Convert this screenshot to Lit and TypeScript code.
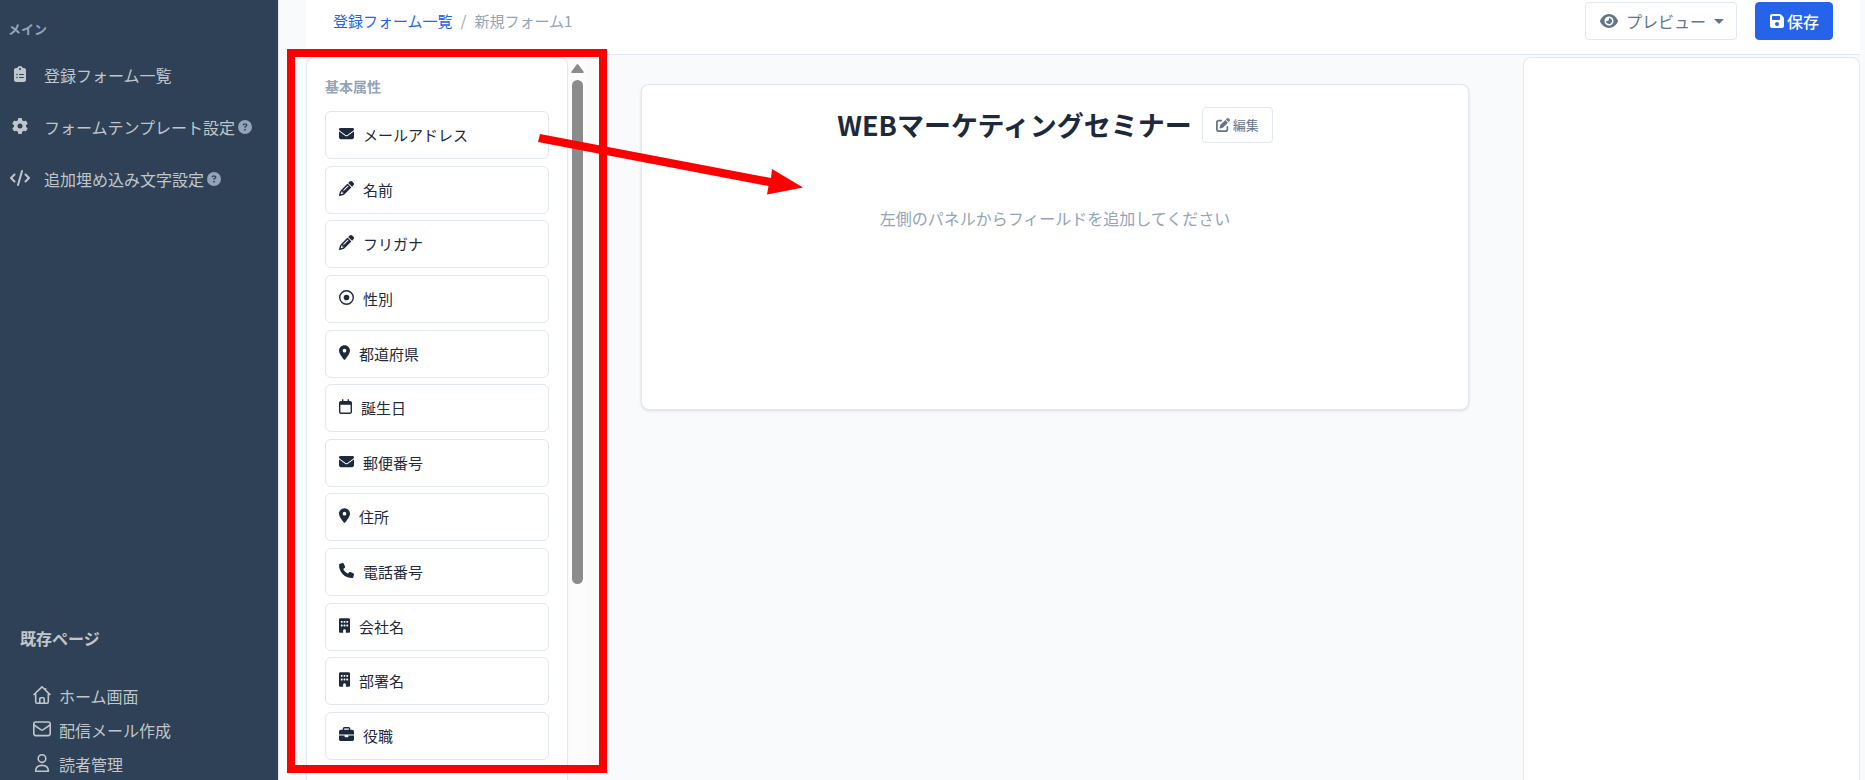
import { LitElement, html, css, svg } from "lit";
import { customElement, property } from "lit/decorators.js";

interface Glyph {
  box: string;
  ratio: number;
  art: unknown;
}

const solid = (width: number, d: string): Glyph => ({
  box: `0 0 ${width} 512`,
  ratio: width / 512,
  art: svg`<path fill="currentColor" fill-rule="evenodd" d=${d}></path>`,
});

const outline = (art: unknown): Glyph => ({
  box: "0 0 18 18",
  ratio: 1,
  art: svg`<g fill="none" stroke="currentColor" stroke-width="1.600" stroke-linecap="round" stroke-linejoin="round">${art}</g>`,
});

const glyphs: Record<string, Glyph> = {
  envelope: solid(512, "M48 64C21.5 64 0 85.5 0 112c0 15.1 7.1 29.3 19.2 38.4L236.8 313.6c11.4 8.5 27 8.5 38.4 0L492.8 150.4c12.1-9.1 19.2-23.3 19.2-38.4c0-26.5-21.5-48-48-48H48zM0 176V384c0 35.3 28.7 64 64 64H448c35.3 0 64-28.7 64-64V176L294.4 339.2c-22.8 17.1-54 17.1-76.8 0L0 176z"),
  pencil: solid(512, "M410.3 231l11.3-11.3-33.9-33.9-62.1-62.1L291.7 89.8l-11.3 11.3-22.6 22.6L58.6 322.9c-10.4 10.4-18 23.3-22.2 37.4L1 480.7c-2.5 8.4-.2 17.5 6.1 23.7s15.3 8.5 23.7 6.1l120.3-35.4c14.1-4.2 27-11.8 37.4-22.2L387.7 253.7 410.3 231zM160 399.4l-9.1 22.7c-4 3.1-8.5 5.4-13.3 6.9L59.4 452l23-78.1c1.4-4.9 3.8-9.4 6.9-13.3l22.7-9.1v32c0 8.8 7.2 16 16 16h32zM362.7 18.7L348.3 33.2 325.7 55.8 314.3 67.1l33.9 33.9 62.1 62.1 33.9 33.9 11.3-11.3 22.6-22.6 14.5-14.5c25-25 25-65.5 0-90.5L453.3 18.7c-25-25-65.5-25-90.5 0zm-47.4 168l-144 144c-6.2 6.2-16.4 6.2-22.6 0s-6.2-16.4 0-22.6l144-144c6.2-6.2 16.4-6.2 22.6 0s6.2 16.4 0 22.6z"),
  radio: solid(512, "M464 256A208 208 0 1 0 48 256a208 208 0 1 0 416 0zM0 256a256 256 0 1 1 512 0A256 256 0 1 1 0 256zm256-96a96 96 0 1 1 0 192 96 96 0 1 1 0-192z"),
  pin: solid(384, "M215.7 499.2C267 435 384 279.4 384 192C384 86 298 0 192 0S0 86 0 192c0 87.4 117 243 168.3 307.2c12.3 15.3 35.1 15.3 47.4 0zM192 128a64 64 0 1 1 0 128 64 64 0 1 1 0-128z"),
  calendar: solid(448, "M152 24c0-13.3-10.7-24-24-24s-24 10.7-24 24V64H64C28.7 64 0 92.7 0 128v16 48V448c0 35.3 28.7 64 64 64H384c35.3 0 64-28.7 64-64V192 144 128c0-35.3-28.7-64-64-64H344V24c0-13.3-10.7-24-24-24s-24 10.7-24 24V64H152V24zM48 192H400V448c0 8.8-7.2 16-16 16H64c-8.8 0-16-7.2-16-16V192z"),
  phone: solid(512, "M164.9 24.6c-7.7-18.6-28-28.5-47.4-23.2l-88 24C12.1 30.2 0 46 0 64C0 311.4 200.6 512 448 512c18 0 33.8-12.1 38.6-29.5l24-88c5.3-19.4-4.6-39.7-23.2-47.4l-96-40c-16.3-6.8-35.2-2.1-46.3 11.6L304.7 368C234.3 334.7 177.3 277.7 144 207.3L193.3 167c13.7-11.2 18.4-30 11.6-46.3l-40-96z"),
  building: solid(384, "M48 0C21.5 0 0 21.5 0 48V464c0 26.5 21.5 48 48 48h96V432c0-26.5 21.5-48 48-48s48 21.5 48 48v80h96c26.5 0 48-21.5 48-48V48c0-26.5-21.5-48-48-48H48zM64 240c0-8.8 7.2-16 16-16h32c8.8 0 16 7.2 16 16v32c0 8.8-7.2 16-16 16H80c-8.8 0-16-7.2-16-16V240zm112-16h32c8.8 0 16 7.2 16 16v32c0 8.8-7.2 16-16 16H176c-8.8 0-16-7.2-16-16V240c0-8.8 7.2-16 16-16zm80 16c0-8.8 7.2-16 16-16h32c8.8 0 16 7.2 16 16v32c0 8.8-7.2 16-16 16H272c-8.8 0-16-7.2-16-16V240zM80 96h32c8.8 0 16 7.2 16 16v32c0 8.8-7.2 16-16 16H80c-8.8 0-16-7.2-16-16V112c0-8.8 7.2-16 16-16zm80 16c0-8.8 7.2-16 16-16h32c8.8 0 16 7.2 16 16v32c0 8.8-7.2 16-16 16H176c-8.8 0-16-7.2-16-16V112zM272 96h32c8.8 0 16 7.2 16 16v32c0 8.8-7.2 16-16 16H272c-8.8 0-16-7.2-16-16V112c0-8.8 7.2-16 16-16z"),
  briefcase: solid(512, "M184 48H328c4.4 0 8 3.6 8 8V96H176V56c0-4.4 3.6-8 8-8zm-56 8V96H64C28.7 96 0 124.7 0 160v96H192 320 512V160c0-35.3-28.7-64-64-64H384V56c0-30.9-25.1-56-56-56H184c-30.9 0-56 25.1-56 56zM512 288H320v32c0 17.7-14.3 32-32 32H224c-17.7 0-32-14.3-32-32V288H0V416c0 35.3 28.7 64 64 64H448c35.3 0 64-28.7 64-64V288z"),
  gear: solid(512, "M495.9 166.6c3.2 8.7 .5 18.4-6.4 24.6l-43.3 39.4c1.1 8.3 1.7 16.8 1.7 25.4s-.6 17.1-1.7 25.4l43.3 39.4c6.9 6.2 9.6 15.9 6.4 24.6c-4.4 11.9-9.7 23.3-15.8 34.3l-4.7 8.1c-6.6 11-14 21.4-22.1 31.2c-5.9 7.2-15.7 9.6-24.5 6.8l-55.7-17.7c-13.4 10.3-28.2 18.9-44 25.4l-12.5 57.1c-2 9.1-9 16.3-18.2 17.8c-13.8 2.3-28 3.5-42.5 3.5s-28.7-1.2-42.5-3.5c-9.2-1.5-16.2-8.7-18.2-17.8l-12.5-57.1c-15.8-6.5-30.6-15.1-44-25.4L83.1 425.9c-8.8 2.8-18.6 .3-24.5-6.8c-8.1-9.8-15.5-20.2-22.1-31.2l-4.7-8.1c-6.1-11-11.4-22.4-15.8-34.3c-3.2-8.7-.5-18.4 6.4-24.6l43.3-39.4C64.6 273.1 64 264.6 64 256s.6-17.1 1.7-25.4L22.4 191.2c-6.9-6.2-9.6-15.9-6.4-24.6c4.4-11.9 9.7-23.3 15.8-34.3l4.7-8.1c6.6-11 14-21.4 22.1-31.2c5.9-7.2 15.7-9.6 24.5-6.8l55.7 17.7c13.4-10.3 28.2-18.9 44-25.4l12.5-57.1c2-9.1 9-16.3 18.2-17.8C227.3 1.2 241.5 0 256 0s28.7 1.2 42.5 3.5c9.2 1.5 16.2 8.7 18.2 17.8l12.5 57.1c15.8 6.5 30.6 15.1 44 25.4l55.7-17.7c8.8-2.8 18.6-.3 24.5 6.8c8.1 9.8 15.5 20.2 22.1 31.2l4.7 8.1c6.1 11 11.4 22.4 15.8 34.3zM256 336a80 80 0 1 0 0-160 80 80 0 1 0 0 160z"),
  code: solid(640, "M392.8 1.2c-17-4.9-34.7 5-39.6 22l-128 448c-4.9 17 5 34.7 22 39.6s34.7-5 39.6-22l128-448c4.9-17-5-34.7-22-39.6zm80.6 120.1c-12.5 12.5-12.5 32.8 0 45.3L562.7 256l-89.4 89.4c-12.5 12.5-12.5 32.8 0 45.3s32.8 12.5 45.3 0l112-112c12.5-12.5 12.5-32.8 0-45.3l-112-112c-12.5-12.5-32.8-12.5-45.3 0zm-306.7 0c-12.5-12.5-32.8-12.5-45.3 0l-112 112c-12.5 12.5-12.5 32.8 0 45.3l112 112c12.5 12.5 32.8 12.5 45.3 0s12.5-32.8 0-45.3L77.3 256l89.4-89.4c12.5-12.5 12.5-32.8 0-45.3z"),
  clipboard: solid(384, "M192 0c-41.800 0-77.400 26.700-90.500 64H64C28.700 64 0 92.700 0 128V448c0 35.300 28.700 64 64 64H320c35.300 0 64-28.700 64-64V128c0-35.300-28.700-64-64-64H282.500C269.400 26.700 233.800 0 192 0zm0 64a32 32 0 1 1 0 64 32 32 0 1 1 0-64zM72 272a24 24 0 1 1 48 0 24 24 0 1 1-48 0zm104-16H304c8.800 0 16 7.200 16 16s-7.200 16-16 16H176c-8.800 0-16-7.200-16-16s7.200-16 16-16zM72 368a24 24 0 1 1 48 0 24 24 0 1 1-48 0zm88 0c0-8.800 7.200-16 16-16H304c8.800 0 16 7.200 16 16s-7.200 16-16 16H176c-8.800 0-16-7.200-16-16z"),
  help: solid(512, "M256 512A256 256 0 1 0 256 0a256 256 0 1 0 0 512zM169.800 165.300c7.900-22.300 29.100-37.300 52.800-37.300h58.300c34.900 0 63.100 28.300 63.100 63.100c0 22.600-12.100 43.500-31.700 54.800L280 264.400c-.2 13-10.900 23.600-24 23.600c-13.300 0-24-10.700-24-24V250.500c0-8.600 4.600-16.500 12.100-20.800l44.300-25.400c4.700-2.700 7.600-7.700 7.600-13.100c0-8.400-6.800-15.100-15.100-15.100H222.600c-3.400 0-6.400 2.100-7.500 5.300l-.4 1.200c-4.400 12.500-18.200 19-30.600 14.600s-19-18.200-14.600-30.600l.4-1.200zM224 352a32 32 0 1 1 64 0 32 32 0 1 1-64 0z"),
  eye: solid(576, "M288 32c-80.8 0-145.5 36.800-192.600 80.600C48.600 156 17.300 208 2.500 243.700c-3.300 7.900-3.300 16.700 0 24.600C17.300 304 48.600 356 95.400 399.400C142.500 443.200 207.200 480 288 480s145.500-36.800 192.600-80.600c46.800-43.500 78.100-95.400 93-131.100c3.300-7.900 3.300-16.700 0-24.600c-14.900-35.700-46.200-87.700-93-131.100C433.500 68.800 368.800 32 288 32zM144 256a144 144 0 1 1 288 0 144 144 0 1 1-288 0zm144-64c0 35.300-28.700 64-64 64c-7.100 0-13.900-1.200-20.300-3.300c-5.500-1.800-11.900 1.600-11.700 7.400c.3 6.900 1.300 13.800 3.200 20.700c13.700 51.200 66.400 81.600 117.600 67.900s81.600-66.400 67.900-117.600c-11.100-41.500-47.800-69.400-88.600-71.100c-5.800-.2-9.200 6.100-7.400 11.700c2.100 6.400 3.300 13.200 3.300 20.300z"),
  save: solid(448, "M64 32C28.7 32 0 60.700 0 96V416c0 35.300 28.700 64 64 64H384c35.300 0 64-28.700 64-64V173.300c0-17-6.700-33.300-18.700-45.300L352 50.700C340 38.700 323.700 32 306.700 32H64zm0 96c0-17.700 14.300-32 32-32H288c17.700 0 32 14.300 32 32v64c0 17.700-14.300 32-32 32H96c-17.700 0-32-14.300-32-32V128zM224 288a64 64 0 1 1 0 128 64 64 0 1 1 0-128z"),
  edit: solid(512, "M471.600 21.700c-21.900-21.900-57.300-21.900-79.200 0L362.300 51.700l97.900 97.900 30.100-30.100c21.900-21.900 21.900-57.300 0-79.200L471.600 21.700zm-299.200 220c-6.100 6.100-10.800 13.600-13.500 21.900l-29.600 88.800c-2.900 8.600-.6 18.100 5.800 24.600s15.900 8.700 24.600 5.800l88.800-29.600c8.200-2.700 15.700-7.400 21.900-13.500L437.700 172.300 339.700 74.300 172.400 241.700zM96 64C43 64 0 107 0 160V416c0 53 43 96 96 96H352c53 0 96-43 96-96V320c0-17.700-14.300-32-32-32s-32 14.300-32 32v96c0 17.700-14.300 32-32 32H96c-17.700 0-32-14.300-32-32V160c0-17.700 14.300-32 32-32h96c17.700 0 32-14.300 32-32s-14.300-32-32-32H96z"),
  home: outline(svg`<path d="M1 8.500 9 .8l3.600 3.500V2.800M12.600 4.300 17 8.500M2.700 8v7.800c0 .8.500 1.400 1.300 1.400h10c.8 0 1.300-.6 1.300-1.400V8M6.800 17v-4.200c0-.6.400-1 1-1h2.400c.6 0 1 .4 1 1V17"></path>`),
  mail: outline(svg`<rect x=".8" y="2" width="16.400" height="13.600" rx="2"></rect><path d="m1 5 6.800 4.600c.8.5 1.600.5 2.400 0L17 5"></path>`),
  user: outline(svg`<circle cx="9" cy="4.600" r="3.800"></circle><path d="M2.600 17.200c0-3.600 2.600-5.800 6.400-5.800s6.400 2.200 6.400 5.800z"></path>`),
};

@customElement("form-icon")
export class FormIcon extends LitElement {
  @property() name = "";
  @property({ type: Number }) size = 15;

  static styles = css`
    :host {
      display: inline-flex;
      flex: none;
    }
    .glyph {
      display: block;
    }
  `;

  render() {
    const glyph = glyphs[this.name];
    if (!glyph) return html``;
    return html`<svg class="glyph" aria-hidden="true" viewBox=${glyph.box}
      width=${Math.round(this.size * glyph.ratio)} height=${this.size}>${glyph.art}</svg>`;
  }
}

const fields = [
  ["envelope", "メールアドレス"],
  ["pencil", "名前"],
  ["pencil", "フリガナ"],
  ["radio", "性別"],
  ["pin", "都道府県"],
  ["calendar", "誕生日"],
  ["envelope", "郵便番号"],
  ["pin", "住所"],
  ["phone", "電話番号"],
  ["building", "会社名"],
  ["building", "部署名"],
  ["briefcase", "役職"],
];

const mainLinks = [
  { icon: "clipboard", label: "登録フォーム一覧", help: false },
  { icon: "gear", label: "フォームテンプレート設定", help: true },
  { icon: "code", label: "追加埋め込み文字設定", help: true },
];

const pageLinks = [
  ["home", "ホーム画面"],
  ["mail", "配信メール作成"],
  ["user", "読者管理"],
];

@customElement("app-root")
export class AppRoot extends LitElement {
  static styles = css`
    :host {
      display: block;
      font-family: "Noto Sans CJK JP", "Noto Sans", sans-serif;
      font-size: 16px;
      line-height: 24px;
      color: #1e293b;
    }
    * {
      box-sizing: border-box;
    }
    a {
      color: inherit;
      text-decoration: none;
    }
    button {
      font: inherit;
      cursor: pointer;
    }
    .shell {
      position: relative;
      display: flex;
      height: 100vh;
      overflow: hidden;
      background: #f8fafc;
    }

    .sidebar {
      flex: none;
      width: 279px;
      display: flex;
      flex-direction: column;
      padding: 19px 0 1px;
      background: #2e4156;
      border-right: 1px solid #e2e8f0;
      color: #c0c6cc;
    }
    .side-label {
      margin: 0 0 10px;
      padding-left: 8px;
      font-size: 13px;
      line-height: 20px;
      font-weight: 700;
      color: #94a3b8;
    }
    .side-link {
      display: flex;
      align-items: center;
      height: 52px;
      padding-left: 10px;
    }
    .side-icon {
      display: flex;
      justify-content: center;
      width: 20px;
      margin-right: 14px;
      padding-bottom: 3px;
    }
    .help {
      margin-left: 3px;
      padding-bottom: 1px;
      color: #94a3b8;
    }
    .pages {
      margin-top: auto;
    }
    .pages-title {
      margin: 0 0 31px;
      padding-left: 20px;
      font-size: 16px;
      font-weight: 700;
    }
    .pages-list {
      display: flex;
      flex-direction: column;
      gap: 4px;
    }
    .page-link {
      display: flex;
      align-items: center;
      gap: 8px;
      padding-left: 33px;
      line-height: 30px;
    }
    .page-icon {
      padding-bottom: 2px;
    }

    .work {
      flex: 1;
      min-width: 0;
      display: flex;
      flex-direction: column;
      margin: 0 5px 0 27px;
    }
    .topbar {
      display: flex;
      align-items: center;
      justify-content: space-between;
      padding: 2px 27px 14px;
      background: #fff;
      border-bottom: 1px solid #e2e8f0;
    }
    .crumbs {
      display: flex;
      gap: 8px;
      font-size: 15px;
      color: #94a3b8;
    }
    .crumb-link {
      color: #2563eb;
    }
    .actions {
      display: flex;
      gap: 18px;
    }
    .btn {
      display: flex;
      align-items: center;
      height: 38px;
      border: 1px solid #e2e8f0;
      border-radius: 4px;
      background: #fff;
      color: #64748b;
      white-space: nowrap;
    }
    .preview {
      gap: 8px;
      padding: 0 12px 0 14px;
    }
    .caret {
      border: 5px solid transparent;
      border-top-color: currentColor;
      border-bottom: 0;
    }
    .save {
      gap: 3px;
      padding: 0 13px 0 14px;
      border-color: #2563eb;
      background: #2563eb;
      color: #fff;
      font-weight: 500;
    }

    .columns {
      flex: 1;
      min-height: 0;
      display: grid;
      grid-template-columns: 281px minmax(0, 1fr) 337px;
      padding-top: 2px;
    }
    .palette {
      display: flex;
      gap: 1px;
      min-height: 0;
    }
    .panel {
      flex: none;
      width: 262px;
      padding: 18px 18px;
      background: #fff;
      border: 1px solid #e2e8f0;
      border-bottom: 0;
      border-radius: 8px 8px 0 0;
    }
    .panel-title {
      margin: 0 0 15px;
      font-size: 14px;
      line-height: 20px;
      font-weight: 700;
      color: #94a3b8;
    }
    .fields {
      display: flex;
      flex-direction: column;
      justify-content: space-between;
      min-height: 649px;
      margin: 0;
      padding: 0;
      list-style: none;
    }
    .field {
      display: flex;
      align-items: center;
      gap: 9px;
      width: 100%;
      height: 48px;
      padding: 0 13px;
      border: 1px solid #e2e8f0;
      border-radius: 6px;
      background: #fff;
      color: #1e293b;
      font-size: 15px;
      text-align: left;
    }
    .field-icon {
      padding-bottom: 3px;
    }
    .scroller {
      display: flex;
      flex-direction: column;
      align-items: center;
      gap: 7px;
      width: 17px;
      padding-top: 7px;
      background: #fcfcfc;
    }
    .scroll-up {
      display: block;
    }
    .thumb {
      width: 11px;
      height: 504px;
      border-radius: 6px;
      background: #8b8b8b;
    }

    .canvas {
      padding: 27px 54px;
    }
    .sheet {
      min-height: 326px;
      padding: 22px 24px;
      border: 1px solid #e2e8f0;
      border-radius: 8px;
      background: #fff;
      box-shadow: 0 1px 3px rgba(15, 23, 42, 0.12);
      text-align: center;
    }
    .sheet-head {
      display: flex;
      justify-content: center;
      align-items: center;
      gap: 10px;
    }
    .sheet-title {
      margin: 0;
      font-size: 27px;
      line-height: 36px;
      font-weight: 700;
    }
    .edit {
      gap: 3px;
      height: 36px;
      padding: 0 13px;
      font-size: 13px;
    }
    .hint {
      margin: 63px 0 0;
      color: #94a3b8;
    }
    .details {
      background: #fff;
      border: 1px solid #e2e8f0;
      border-bottom: 0;
      border-radius: 8px 8px 0 0;
    }

    .callout {
      position: absolute;
      top: 49px;
      left: 287px;
      display: block;
      pointer-events: none;
    }
  `;

  render() {
    return html`
      <div class="shell">
        <aside class="sidebar">
          <h2 class="side-label">メイン</h2>
          <nav>
            ${mainLinks.map(
              (link) => html`
                <a class="side-link" href="#">
                  <span class="side-icon"><form-icon name=${link.icon} size="16"></form-icon></span>
                  <span>${link.label}</span>
                  ${link.help ? html`<form-icon class="help" name="help" size="14"></form-icon>` : ""}
                </a>
              `
            )}
          </nav>
          <section class="pages">
            <h2 class="pages-title">既存ページ</h2>
            <nav class="pages-list">
              ${pageLinks.map(
                ([icon, label]) => html`
                  <a class="page-link" href="#"><form-icon class="page-icon" name=${icon} size="18"></form-icon>${label}</a>
                `
              )}
            </nav>
          </section>
        </aside>

        <div class="work">
          <header class="topbar">
            <nav class="crumbs">
              <a class="crumb-link" href="#">登録フォーム一覧</a>
              <span>/</span>
              <span>新規フォーム1</span>
            </nav>
            <div class="actions">
              <button class="btn preview" type="button">
                <form-icon name="eye" size="16"></form-icon>
                <span>プレビュー</span>
                <span class="caret"></span>
              </button>
              <button class="btn save" type="button">
                <form-icon name="save" size="16"></form-icon>
                <span>保存</span>
              </button>
            </div>
          </header>

          <div class="columns">
            <aside class="palette">
              <div class="panel">
                <h3 class="panel-title">基本属性</h3>
                <ul class="fields">
                  ${fields.map(
                    ([icon, label]) => html`
                      <li>
                        <button class="field" type="button">
                          <form-icon class="field-icon" name=${icon} size="15"></form-icon>
                          <span>${label}</span>
                        </button>
                      </li>
                    `
                  )}
                </ul>
              </div>
              <div class="scroller">
                <svg class="scroll-up" width="13" height="9" viewBox="0 0 13 9" aria-hidden="true">
                  <path d="M5.500.8a1.200 1.200 0 0 1 2 0L12.500 7.500c.5.800.2 1.500-.7 1.500H1.200C.3 9 0 8.300.500 7.500z" fill="#8b8b8b"></path>
                </svg>
                <div class="thumb"></div>
              </div>
            </aside>

            <main class="canvas">
              <section class="sheet">
                <div class="sheet-head">
                  <h1 class="sheet-title">WEBマーケティングセミナー</h1>
                  <button class="btn edit" type="button">
                    <form-icon name="edit" size="14"></form-icon>
                    <span>編集</span>
                  </button>
                </div>
                <p class="hint">左側のパネルからフィールドを追加してください</p>
              </section>
            </main>

            <aside class="details"></aside>
          </div>
        </div>

        <svg class="callout" width="520" height="724" viewBox="0 0 520 724" aria-hidden="true">
          <rect x="4" y="4" width="312" height="716" fill="none" stroke="#f00" stroke-width="8"></rect>
          <path d="M253 85 484 129 485 120 516 138.500 480 145.500 481.500 137 251 93z" fill="#f00"></path>
        </svg>
      </div>
    `;
  }
}
